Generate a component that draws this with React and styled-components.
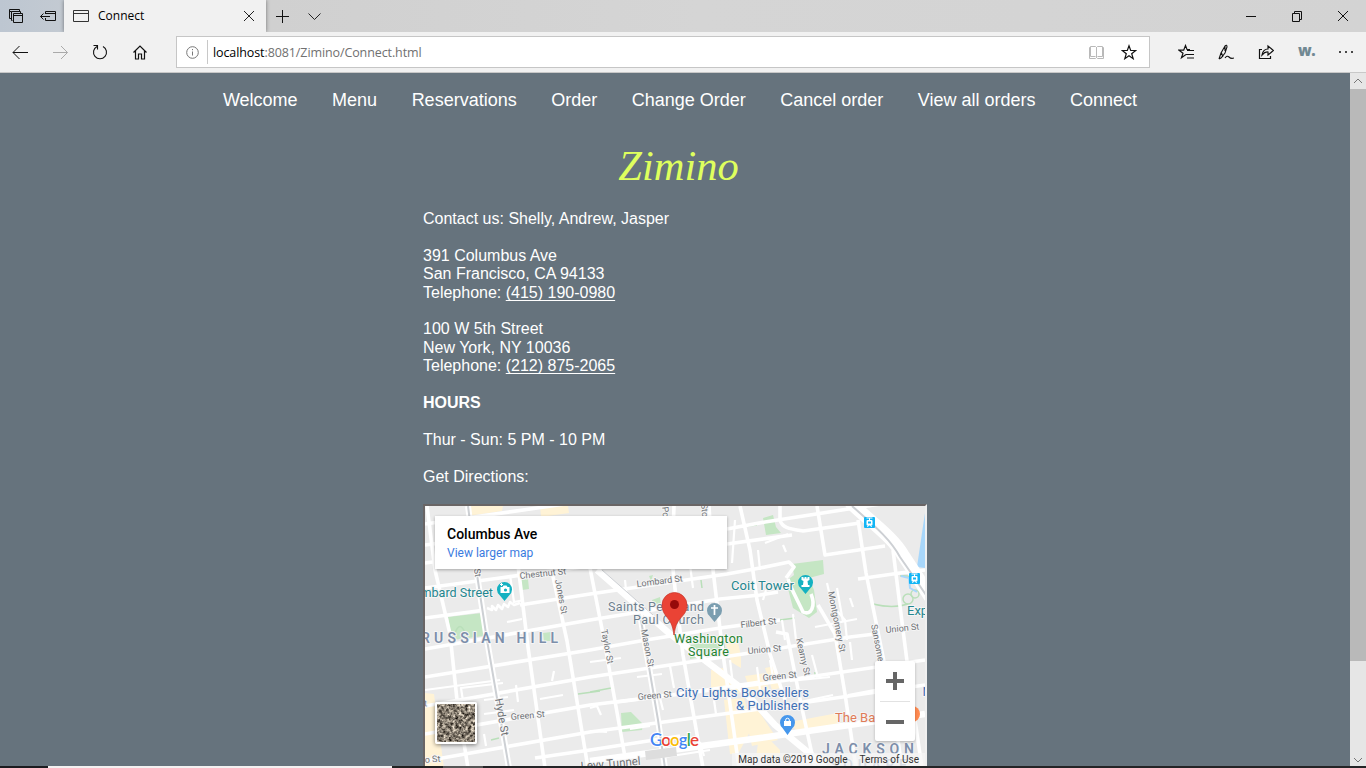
import React from "react";
import styled, { createGlobalStyle } from "styled-components";

const Global = createGlobalStyle`
  * { box-sizing: border-box; }
  html, body { margin: 0; padding: 0; overflow: hidden; }
  body { width: 1366px; height: 768px; font-family: "Liberation Sans", Arial, sans-serif; }
  svg { display: block; }
`;

const Window = styled.div`
  width: 1366px;
  height: 768px;
  display: flex;
  flex-direction: column;
  overflow: hidden;
  background: #f1f1f1;
`;

const TabBar = styled.div`
  height: 32px;
  flex: none;
  display: flex;
  align-items: center;
  background: linear-gradient(90deg, #bdc6d1 0, #c3cad2 64px, #d0d0d0 270px, #d5d5d5 700px, #d3d3d3 100%);
`;

const TabTools = styled.div`
  width: 64px;
  display: flex;
  padding-left: 8px;
  gap: 16px;
`;

const Tab = styled.div`
  width: 202px;
  height: 32px;
  display: flex;
  align-items: center;
  padding: 0 10px 0 9px;
  background: #f1f1f1;
  box-shadow: 0 0 4px rgba(0, 0, 0, 0.45);
  clip-path: inset(0 -6px 0 -6px);
`;

const TabTitle = styled.span`
  flex: 1;
  padding-left: 9px;
  font: 12px/16px "Open Sans", sans-serif;
  color: #000;
`;

const TabActions = styled.div`
  flex: 1;
  display: flex;
  gap: 16px;
  padding-left: 8px;
`;

const WindowControls = styled.div`
  display: flex;
  gap: 30px;
  padding-right: 15px;
`;

const ToolBar = styled.div`
  height: 41px;
  flex: none;
  display: flex;
  align-items: center;
  background: #f1f1f1;
  border-bottom: 1px solid #c8c8c8;
`;

const NavButtons = styled.div`
  width: 176px;
  display: flex;
  gap: 24px;
  padding-left: 12px;
`;

const AddressBar = styled.div`
  width: 974px;
  height: 32px;
  display: flex;
  align-items: center;
  background: #fff;
  border: 1px solid #c6c6c6;
  padding: 0 12px 0 7px;
`;

const AddressDivider = styled.i`
  width: 1px;
  height: 24px;
  margin: 0 5px 0 7px;
  background: #c8c8c8;
`;

const Address = styled.span`
  flex: 1;
  padding-top: 1px;
  font: 12.5px/18px "Open Sans", sans-serif;
  letter-spacing: -0.1px;
  color: #707070;
  b { font-weight: 400; color: #000; }
`;

const AddressActions = styled.div`
  display: flex;
  gap: 17px;
`;

const BrowserActions = styled.div`
  flex: 1;
  display: flex;
  justify-content: space-between;
  padding: 0 12px 0 28px;
`;

const Extension = styled.span`
  width: 16px;
  font: 800 15px/12px "Open Sans", sans-serif;
  color: #718993;
  letter-spacing: -0.5px;
`;

const Viewport = styled.div`
  height: 693px;
  display: flex;
  flex: none;
`;

const Page = styled.main`
  width: 1350px;
  background: #66737d;
  color: #fff;
  display: flex;
  flex-direction: column;
  align-items: center;
  overflow: hidden;
`;

const Menu = styled.nav`
  display: flex;
  gap: 34.5px;
  margin: 16px 0 0 10px;
  flex: none;
`;

const MenuLink = styled.a`
  font-size: 18px;
  line-height: 22px;
  white-space: nowrap;
`;

const Brand = styled.h1`
  margin: 29px 0 0 7px;
  height: 70px;
  flex: none;
  font: italic 400 42.5px/52px "Liberation Serif", serif;
  color: #dfff5e;
`;

const Content = styled.section`
  width: 504px;
  font-size: 16px;
  line-height: 18.4px;
  display: flex;
  flex-direction: column;
  gap: 18.4px;
`;

const Paragraph = styled.div`
  font-weight: ${(p) => (p.$bold ? 700 : 400)};
`;

const Phone = styled.a`
  text-decoration: underline;
  text-underline-offset: 2px;
  text-decoration-thickness: 1px;
  text-decoration-skip-ink: none;
`;

const MapFrame = styled.div`
  position: relative;
  width: 504px;
  height: 266px;
  border: 2px solid;
  border-color: #696565 #f0f0f0 #f0f0f0 #696565;
  overflow: hidden;
  font-family: Roboto, sans-serif;
`;

const PlaceCard = styled.div`
  position: absolute;
  left: 10px;
  top: 10px;
  width: 292px;
  height: 53px;
  padding: 9px 12px;
  background: #fff;
  box-shadow: 0 1px 3px rgba(0, 0, 0, 0.3);
`;

const PlaceName = styled.div`
  font-size: 14px;
  line-height: 18px;
  font-weight: 500;
  color: #000;
`;

const PlaceLink = styled.div`
  font-size: 12px;
  line-height: 20px;
  color: #3a7be0;
`;

const ZoomControl = styled.div`
  position: absolute;
  left: 450px;
  top: 155px;
  width: 40px;
  height: 80px;
  display: flex;
  flex-direction: column;
  align-items: center;
  background: #fff;
  border-radius: 2px;
  box-shadow: 0 1px 3px rgba(0, 0, 0, 0.25);
`;

const ZoomButton = styled.div`
  width: 30px;
  height: 40px;
  display: flex;
  align-items: center;
  justify-content: center;
  border-top: ${(p) => (p.$divided ? "1px solid #e2e2e2" : "0")};
`;

const Satellite = styled.div`
  position: absolute;
  left: 10px;
  top: 196px;
  width: 42px;
  height: 42px;
  border: 2px solid #fff;
  border-radius: 2px;
  box-shadow: 0 1px 4px rgba(0, 0, 0, 0.5);
`;

const Attribution = styled.div`
  position: absolute;
  right: 0;
  top: 247px;
  height: 14px;
  display: flex;
  gap: 12px;
  padding: 0 6px;
  background: rgba(245, 245, 245, 0.75);
  color: #333;
  font-size: 10px;
  line-height: 14px;
  letter-spacing: 0.02px;
  white-space: nowrap;
`;

const ScrollBar = styled.div`
  width: 16px;
  display: flex;
  flex-direction: column;
  align-items: center;
  background: #e6e6e6;
`;

const ScrollArrow = styled.div`
  height: 16px;
  padding-top: ${(p) => (p.$down ? "7px" : "5px")};
  margin-top: ${(p) => (p.$down ? "auto" : "0")};
`;

const ScrollThumb = styled.div`
  width: 16px;
  height: 572px;
  background: #b9b9b9;
`;

const BottomEdge = styled.div`
  height: 2px;
  flex: none;
  background: linear-gradient(90deg, #1b1b1f 48px, #f3f1f1 48px, #f3f1f1 392px, #222 392px, #222 443px, #555 443px, #555 483px, #242426 483px);
`;

const Icon = ({ w = 16, h = 16, color = "#111", sw = 1, children }) => (
  <svg width={w} height={h} viewBox={`0 0 ${w} ${h}`} fill="none" stroke={color} strokeWidth={sw}>{children}</svg>
);

const roadsWide = [
  "M597 570L670 634L740 687L775 725L815 758L825 768",
  "M590 761L650 753L760 738L870 722L925 714",
];
const roadsMain = [
  "M425 563L590 541L727 543",
  "M425 588L500 578L590 566",
  "M425 618L485 610",
  "M520 605L590 594L727 574L760 568L789 562L794 567L786 578",
  "M425 649L590 620L720 599L760 595L778 592",
  "M425 677L590 650L640 641L720 628L780 620",
  "M425 706L590 677L743 654L850 637L875 634",
  "M425 734L590 705L760 684L925 660",
  "M425 761L590 732L760 709L925 685",
  "M535 758L590 750L680 736",
  "M617 702L680 694L760 682",
  "M425 524L600 499", "M425 545L600 522",
  "M727 529L765 522L925 497", "M727 544L792 535",
  "M427 506L435 570L450 634L457 700L468 768",
  "M518 565L528 647L545 768",
  "M552 572L567 641L588 768",
  "M590 568L603 634L625 757",
  "M674 506L672 560L676 598L683 655L703 768",
  "M709 506L713 570L723 654L739 768",
  "M740 506L750 550L757 600L770 654L785 700",
  "M776 632L787 634L800 699L815 768",
  "M817 506L825 555L885 546",
  "M780 506L780 520C782 528 790 529 803 531L860 523",
  "M858 520L866 573L877 627L893 706L902 768",
  "M893 550L903 630L912 700L922 768",
  "M858 579L900 573L925 570",
  "M818 605L835 634L845 694L856 768",
  "M788 579C790 587 799 603 803 612C811 616 816 606 811 594",
];
const roadsMinor = [
  "M510 575L514 602L524 600M507 622L522 619",
  "M425 690L500 680M463 701L461 688L503 683",
  "M516 685L518 702M552 681L554 671M540 699L563 695",
  "M484 700L508 697M484 714L514 710",
  "M484 734L486 746M590 662L621 658M637 677L662 674",
  "M670 666L674 688M660 698L663 710",
  "M625 580L627 600M690 565L693 588M641 610L643 620",
  "M735 520L732 563M758 550L760 570",
  "M765 543L788 534M783 545L786 552M763 600L766 590",
  "M782 620L785 640M793 614L796 640M827 583L832 605L845 620L847 640",
  "M837 588L843 622M850 598L853 607M815 627L857 619",
  "M812 655L817 674M850 642L852 660M800 702L833 695",
  "M848 695L885 688M790 681L830 677M730 660L733 685",
  "M757 667L760 690M770 660L773 677M714 700L716 714",
  "M700 742L704 756M665 757L710 750M630 729L650 726",
  "M590 708L597 706L601 715M590 731L607 732",
];

const labels = [
  ["Lombard St", 637, 587, -7], ["Chestnut St", 520, 579, -6],
  ["Green St", 511, 720, -5], ["Green St", 638, 700, -5],
  ["Green St", 763, 681, -6], ["Filbert St", 741, 628, -7],
  ["Union St", 748, 654, -5], ["Union St", 886, 633, -6],
  ["Hyde St", 495, 699, 80, 11], ["Jones St", 555, 580, 79],
  ["Taylor St", 601, 630, 79], ["Mason St", 641, 630, 79],
  ["Kearny St", 796, 639, 77], ["Montgomery St", 828, 592, 79],
  ["Sansome", 871, 625, 79], ["St", 474, 569, 83],
  ["o St", 425, 763, -5], ["St", 419, 707, -5],
  ["Po", 662, 507, 84], ["Sto", 701, 504, 84],
  ["Levy Tunnel", 581, 770, -5, 11.5],
];

function CityMap() {
  return (
    <svg width="500" height="260" viewBox="425 506 500 260">
      <rect x="425" y="506" width="500" height="260" fill="#ebebeb" />
      <path d="M467 506h36l-1 5-34 5zM540 506h28l1 7-28 4zM425 693l9 1 10 74h-19zM725 641l12-3 4 18 0 12-10-6zM711 670l12-2 8 14 12 10-18 6-14-8zM745 676l20-3 5 20-8 6-12-8zM724 700l20-2 8 30-14 26h-8zM744 712l14-2 20 30-26 6zM765 668l10-2 5 22-8 2zM790 722l48-9 3 10-44 9z M760 730l20 20 0 5-24 2z" fill="#fff3d6" />
      <g fill="#c5e6c4">
        <path d="M448 617l34-4 2 23-32 4zM521 580l7-1 1 10-7 1zM763 518l10-3 3 12 5 6-15 2zM792 564l31-4 1 14-15 4 5 12 3 22-8 6-16-10-7-27 8-6zM690 645l34-5 2 13-36 6zM621 713l10-1 12 12-1 6-20 2zM649 576l4-1-2 6zM652 600l8-3 1 8-8 1zM543 633l8-1 1 9-8 0z" />
      </g>
      <path d="M925 513l-2 13-6 41 8 1z" fill="#a8d7fb" />
      <g fill="none" stroke="#b9dfb9" strokeWidth="1.5">
        <path d="M455 633q5-13 10 0M590 692l21-4M578 694l22-3M780 620l15-2M873 604q20 5 35 0M900 576q20-2 24 20M701 580l1 8M491 740l8-2M746 526l11-1M815 672v7" />
        <circle cx="908" cy="599" r="5" /><circle cx="915" cy="594" r="4" />
      </g>
      <path d="M901 576l8 2 1 10 7 4" fill="none" stroke="#a8d7fb" strokeWidth="2" />
      <g fill="none" stroke="#fff" strokeLinejoin="round">
        {roadsMinor.map((d) => <path key={d} d={d} strokeWidth="2.2" />)}
        {roadsMain.map((d) => <path key={d} d={d} strokeWidth="3.6" />)}
        {roadsWide.map((d) => <path key={d} d={d} strokeWidth="6.5" />)}
        <path d="M487 608l5 2 0-4 4 4 2-5 4 4 2-5 4 3 2-5 4 3 6-2" strokeWidth="2.5" />
        <path d="M468 506L476 568L487 640L509 768M641 620L658 720L665 768" strokeWidth="6" />
        <path d="M850 502C869 521 892 536 903 555Q917 576 932 600" strokeWidth="13" />
      </g>
      <g fill="none" stroke="#cdd0d4" strokeWidth="2">
        <path d="M468 506L476 568L487 640L509 768M641 620L658 720L665 768" />
        <path d="M852 506C871 523 890 538 900 557Q914 577 928 598" />
        <path d="M602 570L653 615" strokeWidth="1" />
      </g>
      <path d="M645 751l31-4 1 9-31 4z" fill="#ddd" />

      <g fontFamily="Roboto, sans-serif" fill="#6f7276" stroke="#f5f5f5" strokeWidth="2" paintOrder="stroke" strokeLinejoin="round">
        {labels.map(([t, x, y, r, s], i) => (
          <text key={i} fontSize={s || 9} transform={`translate(${x} ${y}) rotate(${r})`}>{t}</text>
        ))}
        <g fontSize="13" fill="#24868f">
          <text x="493" y="597" fontSize="12.6" textAnchor="end">mbard Street</text>
          <text x="731" y="590" textLength="63">Coit Tower</text>
          <text x="907" y="615">Exp</text>
        </g>
        <g fontSize="12.5" fill="#6d7f8e">
          <text x="608" y="611" textLength="96">Saints Peter and</text>
          <text x="633" y="624" textLength="71">Paul Church</text>
        </g>
        <g fontSize="12.5" fill="#22832f">
          <text x="674" y="643" textLength="69">Washington</text>
          <text x="688" y="656" textLength="41">Square</text>
        </g>
        <g fontSize="13" fill="#3f70b5">
          <text x="676" y="697" textLength="133">City Lights Booksellers</text>
          <text x="736" y="710" textLength="73">&amp; Publishers</text>
          <text x="922.500" y="696">N</text>
        </g>
        <text x="835" y="722" fontSize="13" fill="#df7b57">The Bar</text>
        <g fontSize="14" fontWeight="600" fill="#7c8eaa">
          <text x="421" y="643" textLength="137">RUSSIAN HILL</text>
          <text x="822" y="754" textLength="92">JACKSON</text>
          <text x="830" y="770" textLength="77">SQUARE</text>
        </g>
      </g>

      <g fill="#14b1c1">
        <path d="M504.500 601l-5-6a7.500 7.500 0 1 1 10 0zM805.500 594l-5-6a7.500 7.500 0 1 1 10 0z" />
        <path d="M500.500 587h2l1-1.500h3l1 1.500h2v6h-9z" fill="#fff" />
        <circle cx="505.500" cy="590" r="1.600" /><path d="M500 584.500h3M501.500 583v3" stroke="#fff" />
        <path d="M801.500 577v3l2 1-.5 4h-1.500v2h8v-2H808l-.5-4 2-1v-3h-2v1.500h-1V577h-2v1.500h-1V577z" fill="#fff" />
      </g>
      <path d="M714.500 622l-5-6a7.500 7.500 0 1 1 10 0z" fill="#7b9eb0" />
      <path d="M714.500 605v10M711 608h7" stroke="#fff" strokeWidth="1.700" />
      <path d="M787.500 735l-5-7a7.500 7.500 0 1 1 10 0z" fill="#4697ec" />
      <path d="M784 721h7v5h-7z" fill="#fff" /><path d="M785.700 721v-1a1.800 1.800 0 0 1 3.600 0v1" fill="none" stroke="#fff" />
      <circle cx="912" cy="714" r="8" fill="#ff8a50" />
      {[[869.5, 522.5], [914.5, 578.5]].map(([x, y]) => (
        <g key={x} transform={`translate(${x} ${y})`}>
          <rect x="-5.500" y="-5.500" width="11" height="11" rx="1" fill="#12b5f5" />
          <path d="M-3-4.500h6M0-4.500v2M-2 4.500L-1 2.500M2 4.500L1 2.500" stroke="#fff" />
          <rect x="-3" y="-2.500" width="6" height="5.500" rx="1" fill="#fff" />
          <rect x="-1.500" y="-1" width="3" height="2" fill="#12b5f5" />
        </g>
      ))}
      <path d="M674 635c-1.500-11-4-14-8-19-3-4-4-7-4-11a12.500 12.500 0 0 1 25 0c0 4-1 7-4.500 11-4.500 5-7 8-8.500 19z" fill="#ea4335" stroke="#c5352a" strokeWidth=".7" />
      <circle cx="674.500" cy="604.500" r="4.500" fill="#960a0a" />
      <text x="650" y="746" fontFamily="Lato, sans-serif" fontWeight="600" fontSize="17" textLength="49" stroke="#fff" strokeWidth="2" paintOrder="stroke">
        <tspan fill="#4285f4">G</tspan><tspan fill="#ea4335">o</tspan><tspan fill="#fbbc05">o</tspan><tspan fill="#4285f4">g</tspan><tspan fill="#34a853">l</tspan><tspan fill="#ea4335">e</tspan>
      </text>
    </svg>
  );
}

const links = ["Welcome", "Menu", "Reservations", "Order", "Change Order", "Cancel order", "View all orders", "Connect"];

export default function App() {
  return (
    <Window>
      <Global />
      <TabBar>
        <TabTools>
          <Icon><path d="M3.500 10.500h-2v-9h10v2M3.500 3.500h-2M4.500 12.500h-1v-9h9v2M5.500 5.500h9v9h-9zM5.500 7.500h9" /></Icon>
          <Icon><path d="M5.500 6V3.500h10v9h-10V10M5.500 5.500h10M.5 8.500H10M3.500 5.500l-3 3 3 3" /></Icon>
        </TabTools>
        <Tab>
          <Icon color="#333"><path d="M.5 2.500h15v11H.5zM.5 5.500h15" /></Icon>
          <TabTitle>Connect</TabTitle>
          <Icon w={14} color="#222"><path d="M2 3l10 10M12 3L2 13" /></Icon>
        </Tab>
        <TabActions>
          <Icon><path d="M2 8.500h13M8.500 2v13" /></Icon>
          <Icon color="#222"><path d="M2.500 5.500l6 6 6-6" /></Icon>
        </TabActions>
        <WindowControls>
          <Icon><path d="M3 8.500h10" /></Icon>
          <Icon><path d="M3.500 5.500h7v8h-7zM5.500 5.500v-2h7v8h-2" /></Icon>
          <Icon><path d="M3 3l10 10M13 3L3 13" /></Icon>
        </WindowControls>
      </TabBar>
      <ToolBar>
        <NavButtons>
          <Icon><path d="M1 8.500h15M7.500 2L1 8.500 7.500 15" /></Icon>
          <Icon color="#aaa"><path d="M1 8.500h14.500M9 2L15.500 8.500 9 15" /></Icon>
          <Icon sw={1.1}><path d="M5 2.500A6.500 6.500 0 1 0 11 2.500M1.500 1.500H5.500V5.500" /></Icon>
          <Icon sw={1.2}><path d="M1.500 8.500L8 2l6.500 6.500M3.500 7v8h3v-5h3v5h3V7" /></Icon>
        </NavButtons>
        <AddressBar>
          <Icon color="#777"><circle cx="8.500" cy="8.500" r="5.800" /><path d="M8.500 7.500v4M8.500 5v1.200" /></Icon>
          <AddressDivider />
          <Address><b>localhost</b>:8081/Zimino/Connect.html</Address>
          <AddressActions>
            <Icon color="#b9b9b9"><path d="M1.500 3.500h1v-1h5l1 1 1-1h5v1h1v11h-6l-1-1-1 1h-6zM8.500 3v11M2.500 3v9.500h5M14.500 3v9.500h-5" /></Icon>
            <Icon sw={1.2}><path d="M8 1.800l1.700 4.700h5l-4 3.200 1.500 5L8 11.800l-4.200 2.900 1.500-5-4-3.200h5z" /></Icon>
          </AddressActions>
        </AddressBar>
        <BrowserActions>
          <Icon sw={1.2}><path d="M8 10.500l-4.500 3.200 1.500-4.500-4-3h4.700L7.500 1.500 9 5.500h3M9 6.500h7M8 10.500h8M9 14h7" /></Icon>
          <Icon sw={1.1}><path d="M1 15L3 9 7 2q2-2 2 1L7 9l-4 5-2 1M3.500 9L5 13M7 2v5M7 14q2-3 4-1t5 1" /></Icon>
          <Icon sw={1.2}><path d="M4 5.500H1.500v9h11V12M4 11q1-6 6-6V2l5.500 4.500L10 11V8q-3-.5-6 3z" /></Icon>
          <Extension>w.</Extension>
          <Icon><path d="M1 8h2M7 8h2M13 8h2" strokeWidth="1.700" /></Icon>
        </BrowserActions>
      </ToolBar>
      <Viewport>
        <Page>
          <Menu>{links.map((t) => <MenuLink key={t}>{t}</MenuLink>)}</Menu>
          <Brand>Zimino</Brand>
          <Content>
            <Paragraph>Contact us: Shelly, Andrew, Jasper</Paragraph>
            <Paragraph>391 Columbus Ave<br />San Francisco, CA 94133<br />Telephone: <Phone>(415) 190-0980</Phone></Paragraph>
            <Paragraph>100 W 5th Street<br />New York, NY 10036<br />Telephone: <Phone>(212) 875-2065</Phone></Paragraph>
            <Paragraph $bold>HOURS</Paragraph>
            <Paragraph>Thur - Sun: 5 PM - 10 PM</Paragraph>
            <Paragraph>Get Directions:</Paragraph>
            <MapFrame>
              <CityMap />
              <PlaceCard>
                <PlaceName>Columbus Ave</PlaceName>
                <PlaceLink>View larger map</PlaceLink>
              </PlaceCard>
              <Satellite>
                <svg width="38" height="38">
                  <filter id="ground" x="0" y="0" width="100%" height="100%" colorInterpolationFilters="sRGB">
                    <feTurbulence type="fractalNoise" baseFrequency="0.32" numOctaves="4" seed="7" />
                    <feColorMatrix values="1.500 .2 0 0 -.32  1.450 .2 0 0 -.33  1.350 .2 0 0 -.33  0 0 0 0 1" />
                  </filter>
                  <rect width="38" height="38" filter="url(#ground)" />
                </svg>
              </Satellite>
              <ZoomControl>
                <ZoomButton><Icon w={18} h={18} color="#666" sw={4}><path d="M0 9h18M9 0v18" /></Icon></ZoomButton>
                <ZoomButton $divided><Icon w={18} h={18} color="#666" sw={4}><path d="M0 9h18" /></Icon></ZoomButton>
              </ZoomControl>
              <Attribution><span>Map data ©2019 Google</span><span>Terms of Use</span></Attribution>
            </MapFrame>
          </Content>
        </Page>
        <ScrollBar>
          <ScrollArrow><Icon w={10} h={6} color="#777"><path d="M1 5l4-4 4 4" /></Icon></ScrollArrow>
          <ScrollThumb />
          <ScrollArrow $down><Icon w={10} h={6} color="#777"><path d="M1 1l4 4 4-4" /></Icon></ScrollArrow>
        </ScrollBar>
      </Viewport>
      <BottomEdge />
    </Window>
  );
}
